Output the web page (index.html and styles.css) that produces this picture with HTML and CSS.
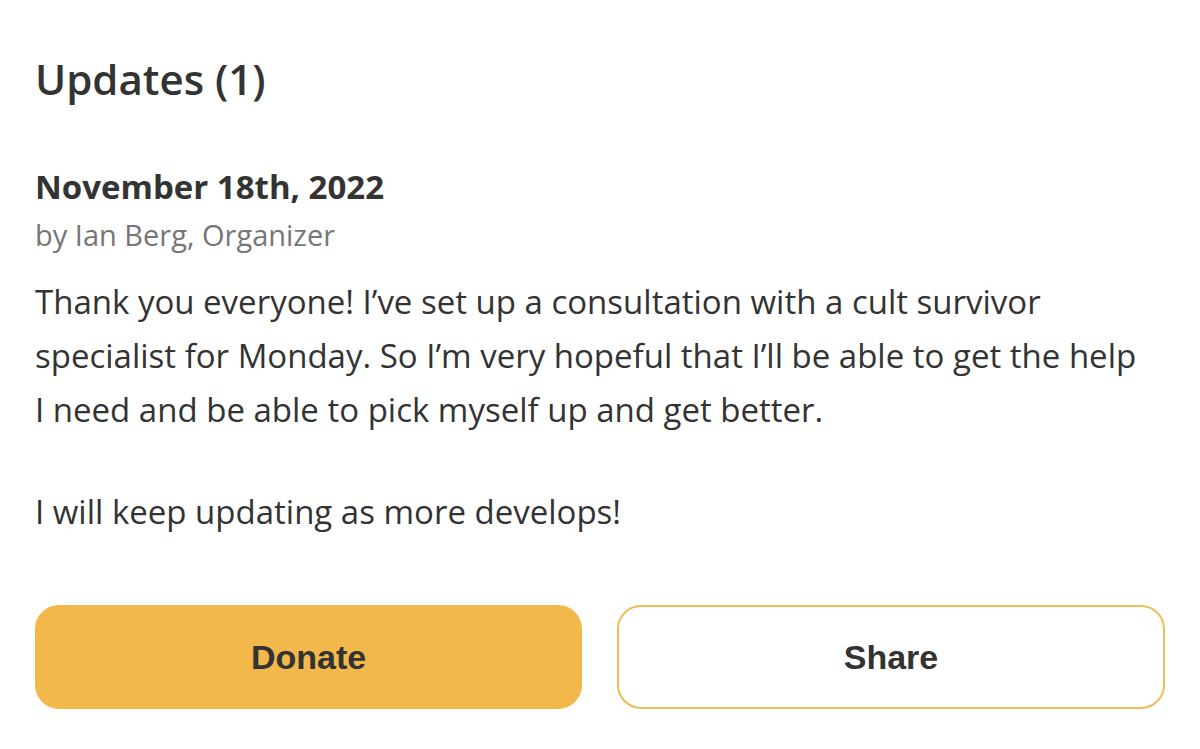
FILE: index.html
```html
<!DOCTYPE html>
<html>
<head>
<meta charset="utf-8">
<link rel="stylesheet" href="styles.css">
</head>
<body>
<main class="updates">
  <h1 class="title">Updates (1)</h1>
  <section class="update">
    <h2 class="date">November 18th, 2022</h2>
    <p class="author">by Ian Berg, Organizer</p>
    <p class="text">Thank you everyone! I’ve set up a consultation with a cult survivor<br>specialist for Monday. So I’m very hopeful that I’ll be able to get the help<br>I need and be able to pick myself up and get better.</p>
    <p class="text second">I will keep updating as more develops!</p>
  </section>
  <div class="actions">
    <button class="btn donate">Donate</button>
    <button class="btn share">Share</button>
  </div>
</main>
</body>
</html>
```
FILE: styles.css
```css
html, body {
  margin: 0;
  padding: 0;
  background: #ffffff;
}
body {
  font-family: "Open Sans", "Noto Sans", sans-serif;
  color: #333333;
}
.updates {
  width: 1130px;
  padding: 49px 0 0 35px;
}
.title {
  margin: 0;
  font-size: 42px;
  font-weight: 600;
  line-height: 60px;
}
.update {
  margin-top: 56px;
}
.date {
  margin: 0;
  font-size: 33px;
  font-weight: 700;
  line-height: 44px;
}
.author {
  margin: 6px 0 0;
  font-size: 29px;
  color: #767676;
  line-height: 40px;
}
.text {
  margin: 20px 0 0;
  font-size: 33px;
  line-height: 54px;
  white-space: nowrap;
}
.text.second {
  margin-top: 48px;
}
.actions {
  display: flex;
  gap: 35px;
  margin-top: 66px;
}
.btn {
  flex: 0 0 547px;
  height: 104px;
  border-radius: 24px;
  font-family: "Liberation Sans", Arial, sans-serif;
  font-size: 34px;
  font-weight: 700;
  color: #333333;
  cursor: pointer;
  padding: 0;
}
.donate {
  background: #f2b84b;
  border: 2px solid #f2b84b;
}
.share {
  flex-basis: 548px;
  background: #ffffff;
  border: 2px solid #eebd55;
}
```
